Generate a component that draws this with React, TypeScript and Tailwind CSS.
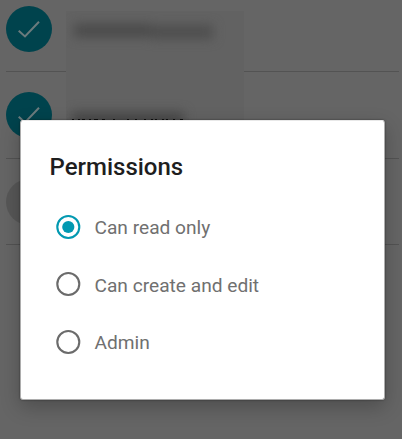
interface MemberRow {
  readonly id: string
  readonly selected: boolean
}

interface PermissionOption {
  readonly id: string
  readonly label: string
}

const MEMBERS: readonly MemberRow[] = [
  { id: 'first', selected: true },
  { id: 'second', selected: true },
  { id: 'third', selected: false },
]

const OPTIONS: readonly PermissionOption[] = [
  { id: 'read', label: 'Can read only' },
  { id: 'edit', label: 'Can create and edit' },
  { id: 'admin', label: 'Admin' },
]

function Avatar({ selected }: { readonly selected: boolean }) {
  return (
    <div
      className={`flex size-[46px] items-center justify-center rounded-full ${selected ? 'bg-[#00434d]' : 'bg-[#575757]'}`}
    >
      {selected && (
        <svg viewBox="0 0 46 46" className="size-[46px]" fill="none" stroke="#6b7b7d" strokeWidth="2">
          <path d="M12.7 24.7 L19 30.4 L33 15.8" />
        </svg>
      )}
    </div>
  )
}

function MemberList() {
  return (
    <div className="flex flex-col pl-1.5 pr-[3px]">
      {MEMBERS.map((member, i) => (
        <div
          key={member.id}
          className={`flex items-start border-b border-[#535353] ${i === 0 ? 'h-[72px] pt-1.5' : 'h-[86.5px] pt-5'}`}
        >
          <Avatar selected={member.selected} />
        </div>
      ))}
    </div>
  )
}

// Blurred patch that hides the member names, with the letter tops showing at its lower edge
function RedactedNames() {
  return (
    <div className="absolute left-[66px] top-[11px] flex h-[109px] w-[178px] flex-col overflow-hidden bg-[#626262]">
      <svg viewBox="0 0 178 109" className="h-[109px] w-[178px]">
        <defs>
          <filter id="smudge" x="-20%" y="-150%" width="140%" height="400%" colorInterpolationFilters="sRGB">
            <feGaussianBlur stdDeviation="5.5" />
          </filter>
        </defs>
        <g filter="url(#smudge)">
          <rect x="8" y="13" width="77" height="13" fill="#4a4a4a" />
          <rect x="85" y="14" width="62" height="14" fill="#4e4e4e" />
        </g>
        <rect x="6" y="101" width="112" height="14" fill="#484848" filter="url(#smudge)" />
        <path
          d="M6 108.5h2M12 108.5h2M16 108.5h3M23 108.5h2M28 108.5h4M36 108.5h3M47 108.5h2M61 108.5h2M69 108.5h2M78 108.5h2M85 108.5h2M89 108.5h2M96 108.5h2M100 108.5h2M107 108.5h2M114 108.5h3"
          stroke="#101010"
          strokeWidth="1"
        />
      </svg>
    </div>
  )
}

function Radio({ checked }: { readonly checked: boolean }) {
  return (
    <svg viewBox="0 0 24 24" className={`size-6 shrink-0 overflow-visible ${checked ? 'text-[#0299b1]' : 'text-[#6b6b6b]'}`}>
      <circle cx="12.3" cy="12" r="11" fill="none" stroke="currentColor" strokeWidth="2.1" />
      {checked && <circle cx="12.3" cy="12" r="6.1" fill="currentColor" />}
    </svg>
  )
}

function PermissionsDialog() {
  return (
    <div
      role="dialog"
      className="flex h-[280px] w-[365px] flex-col gap-[15px] rounded-[3px] border border-t-[#e8e8e8] border-[#adadad] bg-white pl-[28.5px] pt-[30px] shadow-[0_7px_20px_rgba(0,0,0,0.24),0_0_2px_rgba(0,0,0,0.5)]"
    >
      <h2 className="text-[24px] font-medium leading-8 text-[#1e1e1e]">Permissions</h2>
      <div role="radiogroup" className="flex flex-col pl-[6.5px]">
        {OPTIONS.map((option) => (
          <div
            key={option.id}
            role="radio"
            aria-checked={option.id === 'read'}
            className="flex h-[57.5px] items-center gap-[14.5px]"
          >
            <Radio checked={option.id === 'read'} />
            <span className="pt-[3px] text-[19.15px] leading-7 text-[#707070]">{option.label}</span>
          </div>
        ))}
      </div>
    </div>
  )
}

export default function App() {
  return (
    <div className="relative h-[439px] w-[402px] overflow-hidden bg-[#656565] font-['Roboto',sans-serif]">
      <MemberList />
      <RedactedNames />
      <div className="absolute inset-0 flex items-start pl-5 pt-[120px]">
        <PermissionsDialog />
      </div>
    </div>
  )
}
